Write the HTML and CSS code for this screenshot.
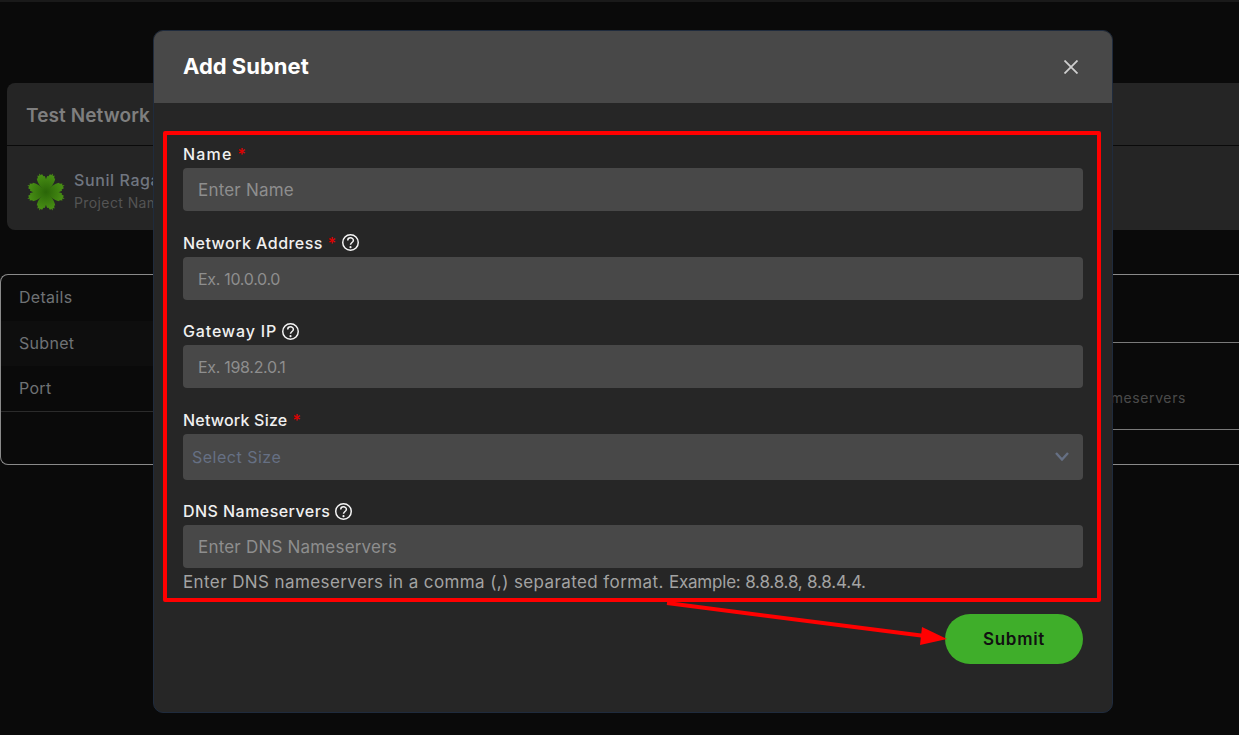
FILE: index.html
```html
<!DOCTYPE html>
<html lang="en">
<head>
    <meta charset="UTF-8">
    <meta name="viewport" content="width=device-width, initial-scale=1.0">
    <title>Add Subnet</title>
    <link rel="stylesheet" href="styles.css">
</head>
<body>
    <div class="topbar"></div>

    <div class="page">
        <div class="network-card">
            <div class="network-title">Test Network</div>
            <div class="network-owner">
                <svg class="owner-logo" viewBox="-20 -20 40 40">
                    <defs>
                        <radialGradient id="leaf" gradientUnits="userSpaceOnUse" cx="0" cy="0" r="20">
                            <stop offset="0" stop-color="#2a6508"/>
                            <stop offset="1" stop-color="#4c9416"/>
                        </radialGradient>
                        <path id="petal" d="M0 0 C-3 -5 -5 -10 -4.2 -15.5 L-3 -15.6 L-2.4 -18.4 L-0.9 -17.4 L0 -19.8 L0.9 -17.4 L2.4 -18.4 L3 -15.6 L4.2 -15.5 C5 -10 3 -5 0 0Z"/>
                    </defs>
                    <g fill="url(#leaf)">
                        <circle r="6"/>
                        <use href="#petal" transform="rotate(20)"/>
                        <use href="#petal" transform="rotate(70)"/>
                        <use href="#petal" transform="rotate(110)"/>
                        <use href="#petal" transform="rotate(160)"/>
                        <use href="#petal" transform="rotate(200)"/>
                        <use href="#petal" transform="rotate(250)"/>
                        <use href="#petal" transform="rotate(290)"/>
                        <use href="#petal" transform="rotate(340)"/>
                    </g>
                </svg>
                <div>
                    <div class="owner-name">Sunil Ragavan</div>
                    <div class="owner-project">Project Name</div>
                </div>
            </div>
        </div>

        <div class="tabs-panel">
            <div class="tabs">
                <div class="tab">Details</div>
                <div class="tab tab-active">Subnet</div>
                <div class="tab tab-last">Port</div>
            </div>
            <div class="tab-content">
                <div class="table-head"></div>
                <div class="table-row">DNS Nameservers</div>
            </div>
        </div>
    </div>

    <div class="modal">
        <div class="modal-header">
            <h2>Add Subnet</h2>
            <svg class="close-icon" viewBox="0 0 14 14">
                <path d="M0.5 0.5 L13.5 13.5 M13.5 0.5 L0.5 13.5"/>
            </svg>
        </div>
        <div class="modal-body">
            <div class="field">
                <label class="label-name">Name <span class="req">*</span></label>
                <div class="input">Enter Name</div>
            </div>
            <div class="field">
                <label>Network Address <span class="req">*</span>
                    <svg class="help-icon" viewBox="0 0 16 16"><circle cx="8" cy="8" r="7.3"/><path d="M5.4 6 C5.4 2.8 10.7 2.8 10.7 6 C10.7 8 8 8 8 10.2"/><circle class="dot" cx="8" cy="12.4" r="1"/></svg>
                </label>
                <div class="input input-ex">Ex. 10.0.0.0</div>
            </div>
            <div class="field">
                <label class="label-gateway">Gateway IP
                    <svg class="help-icon" viewBox="0 0 16 16"><circle cx="8" cy="8" r="7.3"/><path d="M5.4 6 C5.4 2.8 10.7 2.8 10.7 6 C10.7 8 8 8 8 10.2"/><circle class="dot" cx="8" cy="12.4" r="1"/></svg>
                </label>
                <div class="input input-ex">Ex. 198.2.0.1</div>
            </div>
            <div class="field">
                <label class="label-size">Network Size <span class="req">*</span></label>
                <div class="select">
                    <span>Select Size</span>
                    <svg class="chevron" viewBox="0 0 14 9"><path d="M1 1 L7 7.5 L13 1"/></svg>
                </div>
            </div>
            <div class="field field-last">
                <label>DNS Nameservers
                    <svg class="help-icon" viewBox="0 0 16 16"><circle cx="8" cy="8" r="7.3"/><path d="M5.4 6 C5.4 2.8 10.7 2.8 10.7 6 C10.7 8 8 8 8 10.2"/><circle class="dot" cx="8" cy="12.4" r="1"/></svg>
                </label>
                <div class="input">Enter DNS Nameservers</div>
                <div class="hint">Enter DNS nameservers in a comma (,) separated format. <span class="hint-example">Example: 8.8.8.8, 8.8.4.4.</span></div>
            </div>
            <div class="actions">
                <button class="btn-submit">Submit</button>
            </div>
        </div>
    </div>

    <!-- red annotation on top of the screenshot -->
    <div class="mark-box"></div>
    <svg class="mark-arrow" viewBox="0 0 1239 735">
        <path class="arrow-line" d="M667 603 L925 636"/>
        <path class="arrow-head" d="M947 639 L922 627 L920 645Z"/>
    </svg>
</body>
</html>
```

FILE: styles.css
```css
* {
    box-sizing: border-box;
}
html, body {
    height: 100%;
}
body {
    margin: 0;
    background-color: #0a0a0a;
    font-family: Inter, "Liberation Sans", sans-serif;
    overflow: hidden;
}
.topbar {
    height: 2px;
    background-color: #1a1a1a;
}

/* page behind the modal */
.page {
    padding-top: 81px;
}
.network-card {
    margin-left: 7px;
    height: 147px;
    background-color: #252525;
    border-radius: 8px 0 0 8px;
}
.network-title {
    height: 63px;
    padding: 19px 19px 0;
    border-bottom: 1px solid #0a0a0a;
    color: #7f7f7f;
    font-size: 19px;
    font-weight: 600;
    letter-spacing: 0.1px;
    line-height: 27px;
}
.network-owner {
    display: flex;
    align-items: center;
    gap: 8px;
    padding: 23px 19px 0;
}
.owner-logo {
    width: 40px;
    height: 40px;
}
.owner-name {
    color: #707680;
    font-size: 16px;
    font-weight: 500;
    letter-spacing: 0.6px;
    line-height: 23px;
}
.owner-project {
    color: #545454;
    font-size: 14px;
    letter-spacing: 0.4px;
    line-height: 22px;
}
.tabs-panel {
    display: flex;
    height: 191px;
    margin-top: 44px;
    border: 1px solid #8a8a8a;
    border-right: none;
    border-radius: 8px 0 0 8px;
}
.tabs {
    width: 300px;
}
.tab {
    height: 45.5px;
    padding-left: 18px;
    color: #6f7275;
    font-size: 16px;
    letter-spacing: 0.3px;
    line-height: 45px;
}
.tab-active {
    background-color: #0e0e0e;
}
.tab-last {
    border-bottom: 1px solid #2b2b2b;
}
.tab-content {
    flex: 1;
}
.table-head {
    height: 68px;
    border-bottom: 1px solid #7a7a7a;
}
.table-row {
    height: 87px;
    padding-right: 53px;
    border-bottom: 1px solid #7a7a7a;
    color: #4a4a4a;
    font-size: 14px;
    letter-spacing: 0.6px;
    line-height: 109px;
    text-align: right;
}

/* modal */
.modal {
    position: absolute;
    top: 30px;
    left: 153px;
    width: 960px;
    height: 683px;
    background-color: #262626;
    border: 1px solid #1f2b3d;
    border-radius: 10px;
    overflow: hidden;
}
.modal-header {
    display: flex;
    align-items: center;
    justify-content: space-between;
    height: 72px;
    padding: 0 34px 0 29px;
    background-color: #484848;
}
.modal-header h2 {
    margin: 0 0 3px;
    color: #fff;
    font-size: 22px;
    font-weight: 700;
}
.close-icon {
    width: 14px;
    height: 14px;
    fill: none;
    stroke: #cfcfcf;
    stroke-width: 1.8;
}
.modal-body {
    padding: 41px 29px 0;
}
.field {
    margin-bottom: 21.5px;
}
.field label {
    display: flex;
    align-items: center;
    gap: 5px;
    height: 24px;
    padding-bottom: 4px;
    color: #f0f0f0;
    font-size: 16px;
    font-weight: 500;
    letter-spacing: 0.45px;
}
.field .label-name {
    letter-spacing: 1.2px;
}
.field .label-gateway {
    letter-spacing: 0.85px;
}
.field .label-size {
    letter-spacing: 0.2px;
}
.req {
    color: #e00000;
}
.help-icon {
    width: 17px;
    height: 17px;
    fill: none;
    stroke: #f5f5f5;
    stroke-width: 1.4;
}
.help-icon .dot {
    fill: #f5f5f5;
    stroke: none;
}
.input, .select {
    background-color: #484848;
    border-radius: 4px;
    color: #8e8e8e;
}
.input {
    height: 43px;
    padding-left: 15px;
    font-size: 17px;
    letter-spacing: 0.2px;
    line-height: 44px;
}
.input-ex {
    font-size: 16px;
    letter-spacing: -0.3px;
}
.select {
    display: flex;
    align-items: center;
    justify-content: space-between;
    height: 46px;
    padding: 0 14px 0 9px;
    color: #667084;
    font-size: 16px;
    letter-spacing: 0.5px;
}
.chevron {
    width: 14px;
    height: 9px;
    fill: none;
    stroke: #667084;
    stroke-width: 2.4;
}
.field-last {
    margin-bottom: 20px;
}
.hint {
    height: 26px;
    color: #a3a3a3;
    font-size: 17px;
    letter-spacing: 0.4px;
    line-height: 28px;
    white-space: nowrap;
}
.hint-example {
    letter-spacing: -0.2px;
}
.actions {
    display: flex;
    justify-content: flex-end;
}
.btn-submit {
    width: 138px;
    height: 50px;
    background-color: #3fae2a;
    border: none;
    border-radius: 25px;
    color: #111;
    font-family: inherit;
    font-size: 17px;
    font-weight: 600;
    letter-spacing: 0.7px;
}

/* annotation */
.mark-box {
    position: absolute;
    top: 131px;
    left: 163px;
    width: 938px;
    height: 471px;
    border: 4px solid #ff0000;
    border-radius: 2px;
}
.mark-arrow {
    position: absolute;
    top: 0;
    left: 0;
    width: 1239px;
    height: 735px;
}
.arrow-line {
    fill: none;
    stroke: #ff0000;
    stroke-width: 4;
}
.arrow-head {
    fill: #ff0000;
}
```
